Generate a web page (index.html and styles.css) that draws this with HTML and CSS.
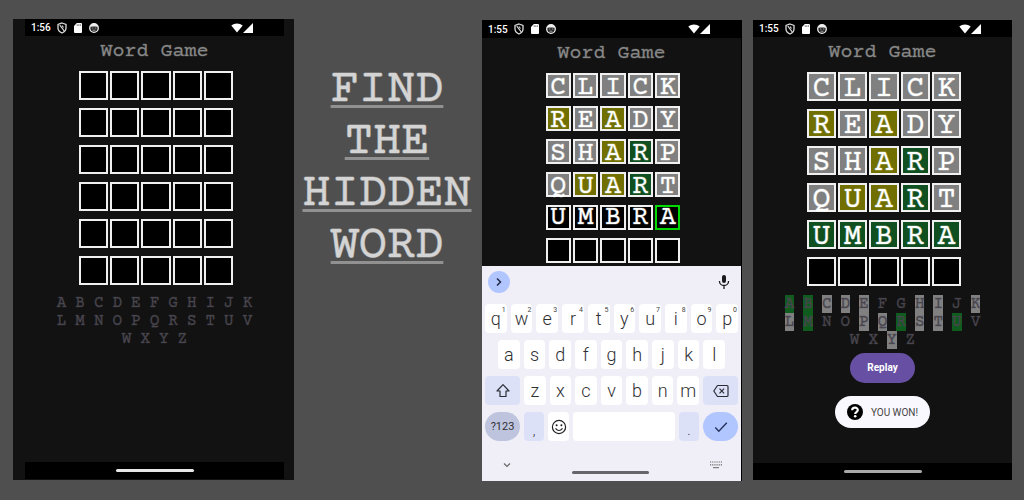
FILE: index.html
```html
<!DOCTYPE html>
<html lang="en">
<head>
<meta charset="utf-8">
<meta name="viewport" content="width=device-width, initial-scale=1">
<title>Word Game</title>
<link rel="stylesheet" href="styles.css">
</head>
<body>
<svg class="defs" aria-hidden="true">
  <symbol id="shield" viewBox="0 0 10 12"><path d="M5 1 9 2.400V6c0 2.400-1.500 4-4 5C2.500 10 1 8.400 1 6V2.400Z" fill="none" stroke="#ddd" stroke-width="1.300"/><path d="M2.800 3.200 7.200 8.800M5 3.500l1.500 2" stroke="#ddd" stroke-width="1.100"/></symbol>
  <symbol id="sd" viewBox="0 0 8 10"><path d="M2.800 0H7q1 0 1 1v8q0 1-1 1H1q-1 0-1-1V3Z" fill="#fff"/><path d="M3.200 1.300v1.600M4.800 1.300v1.600M6.400 1.300v1.600" stroke="#555" stroke-width=".8"/></symbol>
  <symbol id="face" viewBox="0 0 10 10"><circle cx="5" cy="5" r="4.300" fill="#222" stroke="#f0f0f0" stroke-width="1.300"/><path d="M1 4.200Q1.800.8 5 .8T9 4.200L7 3.500H3Z" fill="#f0f0f0"/><path d="M2.800 5h1.600M5.800 5h1.600M3.500 7.200h3" stroke="#aaa" stroke-width=".9"/></symbol>
  <symbol id="wifi" viewBox="0 0 12 10"><path d="M6 9.500.3 2.600C3.500-.2 8.500-.2 11.700 2.600Z" fill="#fff"/></symbol>
  <symbol id="signal" viewBox="0 0 10 10"><path d="M10 0v10H0Z" fill="#fff"/></symbol>
</svg>
<main class="showcase">
  <section class="phone phone-start">
    <div class="screen">
      <div class="status"><time>1:56</time><svg class="shield"><use href="#shield"/></svg><svg class="sd"><use href="#sd"/></svg><svg class="face"><use href="#face"/></svg><svg class="wifi"><use href="#wifi"/></svg><svg class="signal"><use href="#signal"/></svg></div>
      <h2 class="title">Word Game</h2>
      <div class="board">
        <span></span><span></span><span></span><span></span><span></span>
        <span></span><span></span><span></span><span></span><span></span>
        <span></span><span></span><span></span><span></span><span></span>
        <span></span><span></span><span></span><span></span><span></span>
        <span></span><span></span><span></span><span></span><span></span>
        <span></span><span></span><span></span><span></span><span></span>
      </div>
      <div class="letters">
        <div><b>A</b><b>B</b><b>C</b><b>D</b><b>E</b><b>F</b><b>G</b><b>H</b><b>I</b><b>J</b><b>K</b></div>
        <div><b>L</b><b>M</b><b>N</b><b>O</b><b>P</b><b>Q</b><b>R</b><b>S</b><b>T</b><b>U</b><b>V</b></div>
        <div><b>W</b><b>X</b><b>Y</b><b>Z</b></div>
      </div>
      <div class="nav"><i></i></div>
    </div>
  </section>

  <h1 class="headline">FIND<br>THE<br>HIDDEN<br>WORD</h1>

  <section class="phone phone-typing">
    <div class="screen">
      <div class="status"><time>1:55</time><svg class="shield"><use href="#shield"/></svg><svg class="sd"><use href="#sd"/></svg><svg class="face"><use href="#face"/></svg><svg class="wifi"><use href="#wifi"/></svg><svg class="signal"><use href="#signal"/></svg></div>
      <h2 class="title">Word Game</h2>
      <div class="board compact">
        <span class="miss">C</span><span class="miss">L</span><span class="miss">I</span><span class="miss">C</span><span class="miss">K</span>
        <span class="near">R</span><span class="miss">E</span><span class="near">A</span><span class="miss">D</span><span class="miss">Y</span>
        <span class="miss">S</span><span class="miss">H</span><span class="near">A</span><span class="hit">R</span><span class="miss">P</span>
        <span class="miss">Q</span><span class="near">U</span><span class="near">A</span><span class="hit">R</span><span class="miss">T</span>
        <input aria-label="Letter 1" maxlength="1" value="U"><input aria-label="Letter 2" maxlength="1" value="M"><input aria-label="Letter 3" maxlength="1" value="B"><input aria-label="Letter 4" maxlength="1" value="R"><input class="active" aria-label="Letter 5" maxlength="1" value="A">
        <span></span><span></span><span></span><span></span><span></span>
      </div>
      <div class="keyboard">
        <div class="tools">
          <button class="expand" aria-label="Expand toolbar"><svg viewBox="0 0 22 22"><path d="m9 7.500 3.500 3.500L9 14.500" fill="none" stroke="#222b45" stroke-width="1.500"/></svg></button>
          <button class="mic" aria-label="Voice input"><svg viewBox="0 0 12 16"><rect x="4" y="1" width="4" height="8" rx="2" fill="#1b1b1f"/><path d="M1.500 7v.5a4.500 4 0 0 0 9 0V7M6 12v3" fill="none" stroke="#1b1b1f" stroke-width="1.300"/></svg></button>
        </div>
        <div class="keys"><button>q<sup>1</sup></button><button>w<sup>2</sup></button><button>e<sup>3</sup></button><button>r<sup>4</sup></button><button>t<sup>5</sup></button><button>y<sup>6</sup></button><button>u<sup>7</sup></button><button>i<sup>8</sup></button><button>o<sup>9</sup></button><button>p<sup>0</sup></button></div>
        <div class="keys home"><button>a</button><button>s</button><button>d</button><button>f</button><button>g</button><button>h</button><button>j</button><button>k</button><button>l</button></div>
        <div class="keys"><button class="wide tint" aria-label="Shift"><svg viewBox="0 0 16 16"><path d="M8 1.700 14 8h-3v5.500H5V8H2Z" fill="none" stroke="#2b2d36" stroke-width="1.200" stroke-linejoin="round"/></svg></button><button>z</button><button>x</button><button>c</button><button>v</button><button>b</button><button>n</button><button>m</button><button class="wide tint" aria-label="Backspace"><svg viewBox="0 0 16 16"><path d="M4.500 2.500H14q1 0 1 1v9q0 1-1 1H4.500L.8 8Z" fill="none" stroke="#2b2d36" stroke-width="1.200" stroke-linejoin="round"/><path d="m6.500 5.700 4.600 4.600m0-4.600-4.600 4.600" stroke="#2b2d36" stroke-width="1.200"/></svg></button></div>
        <div class="keys"><button class="wide symbols">?123</button><button class="tint low">,</button><button aria-label="Emoji"><svg viewBox="0 0 16 16"><circle cx="8" cy="8" r="6.600" fill="none" stroke="#222" stroke-width="1.200"/><circle cx="5.600" cy="6.300" r="1" fill="#222"/><circle cx="10.400" cy="6.300" r="1" fill="#222"/><path d="M4.500 9.300q3.500 4.400 7 0" fill="none" stroke="#222" stroke-width="1.200"/></svg></button><button class="space" aria-label="Space"></button><button class="tint low">.</button><button class="wide enter" aria-label="Enter"><svg viewBox="0 0 16 16"><path d="m2.300 8.500 3.500 3.700 8-8.400" fill="none" stroke="#26345c" stroke-width="1.400"/></svg></button></div>
        <div class="bottom">
          <svg class="down" viewBox="0 0 8 8"><path d="m1 2.500 3 3 3-3" fill="none" stroke="#666" stroke-width="1.200"/></svg>
          <i></i>
          <svg class="switch" viewBox="0 0 12 8"><path d="M0 1h12M0 3.800h12" stroke="#666" stroke-width="1.200" stroke-dasharray="1.200 .96"/><path d="M3 6.700h6" stroke="#666" stroke-width="1"/></svg>
        </div>
      </div>
    </div>
  </section>

  <section class="phone phone-won">
    <div class="screen">
      <div class="status"><time>1:55</time><svg class="shield"><use href="#shield"/></svg><svg class="sd"><use href="#sd"/></svg><svg class="face"><use href="#face"/></svg><svg class="wifi"><use href="#wifi"/></svg><svg class="signal"><use href="#signal"/></svg></div>
      <h2 class="title">Word Game</h2>
      <div class="board">
        <span class="miss">C</span><span class="miss">L</span><span class="miss">I</span><span class="miss">C</span><span class="miss">K</span>
        <span class="near">R</span><span class="miss">E</span><span class="near">A</span><span class="miss">D</span><span class="miss">Y</span>
        <span class="miss">S</span><span class="miss">H</span><span class="near">A</span><span class="hit">R</span><span class="miss">P</span>
        <span class="miss">Q</span><span class="near">U</span><span class="near">A</span><span class="hit">R</span><span class="miss">T</span>
        <span class="hit">U</span><span class="hit">M</span><span class="hit">B</span><span class="hit">R</span><span class="hit">A</span>
        <span></span><span></span><span></span><span></span><span></span>
      </div>
      <div class="letters">
        <div><b class="hit">A</b><b class="hit">B</b><b class="miss">C</b><b class="miss">D</b><b class="miss">E</b><b>F</b><b>G</b><b class="miss">H</b><b class="miss">I</b><b>J</b><b class="miss">K</b></div>
        <div><b class="miss">L</b><b class="hit">M</b><b>N</b><b>O</b><b class="miss">P</b><b class="miss">Q</b><b class="hit">R</b><b class="miss">S</b><b class="miss">T</b><b class="hit">U</b><b>V</b></div>
        <div><b>W</b><b>X</b><b class="miss">Y</b><b>Z</b></div>
      </div>
      <button class="replay">Replay</button>
      <div class="toast" role="status"><svg viewBox="0 0 16 16"><circle cx="8" cy="8" r="8" fill="#000"/><path d="M5.200 6.200C5.200 2.800 10.800 2.800 10.800 6.100c0 2-2.600 2-2.600 3.800" fill="none" stroke="#fff" stroke-width="2.200"/><circle cx="8.200" cy="12.300" r="1.300" fill="#fff"/></svg>YOU WON!</div>
      <div class="nav dim"><i></i></div>
    </div>
  </section>
</main>
</body>
</html>
```
FILE: styles.css
```css
* { box-sizing: border-box; }

body {
  margin: 0;
  background: #4f4f4f;
  font-family: Roboto, sans-serif;
}

.defs { position: absolute; width: 0; height: 0; }

button { border: 0; padding: 0; font: inherit; }

.showcase {
  display: grid;
  grid-template-columns: 281fr 188fr 260fr 270fr;
  min-height: 100vh;
  padding: 19px 12px 19px 13px;
}

.phone { display: flex; background: #121212; }
.phone-start { padding: 0 10px 1px 12px; margin-bottom: 1px; }
.phone-typing { margin-top: 1px; border-right: 1px solid #000; }
.phone-won { margin: 1px 0 1px 11px; }

.screen { flex: 1; display: flex; flex-direction: column; align-items: center; }

.status {
  align-self: stretch;
  display: flex;
  align-items: center;
  height: 17px;
  padding: 0 31px 0 6px;
  background: #000;
  color: #fff;
  font-size: 10px;
  font-weight: 500;
}
.phone-typing .status { height: 18px; }
.status time { width: 26px; }
.shield { width: 10px; height: 12px; }
.sd { width: 8px; height: 10px; margin-left: 7px; }
.face { width: 10px; height: 10px; margin-left: 7px; }
.wifi { width: 12px; height: 10px; margin-left: auto; }
.signal { width: 10px; height: 10px; }

.title, .headline, .board, .letters {
  font-family: "Nimbus Mono PS", "Courier Prime", "Liberation Mono", monospace;
}

.title {
  margin: 4px 0 7px;
  color: #888;
  font-size: 20px;
  font-weight: 400;
  line-height: 24px;
  -webkit-text-stroke: 1px rgba(136, 136, 136, 0.3);
}

.headline {
  margin: 46px 2px 0 0;
  color: #d4d4d4;
  font-size: 47px;
  font-weight: 400;
  line-height: 52px;
  text-align: center;
  text-decoration: underline;
  text-decoration-thickness: 3px;
  text-underline-offset: 4px;
  text-decoration-skip-ink: none;
  -webkit-text-stroke: 1px rgba(212, 212, 212, 0.5);
}

.board {
  display: grid;
  grid-template-columns: repeat(5, 1fr);
  grid-auto-rows: 29px;
  gap: 8px 2px;
  width: 157px;
  padding-left: 3px;
  color: #fff;
  font-size: 30px;
  line-height: 29px;
}
.board.compact {
  grid-auto-rows: 25px;
  width: 138px;
  font-size: 27px;
  line-height: 25px;
}
.board span, .board input {
  min-width: 0;
  padding: 1px 0 0;
  border: 2px solid #f0f0f0;
  border-radius: 0;
  background: #000;
  color: #fff;
  font: inherit;
  text-align: center;
  -webkit-text-stroke: 1px rgba(255, 255, 255, 0.35);
}
.board .active { border-color: #00d900; }
.board .miss, .letters .miss { background: #808080; }
.board .near { background: #706f00; }
.board .hit { background: #105020; }

.letters {
  margin-top: 9px;
  color: #48454e;
  font-size: 16px;
  line-height: 18px;
  -webkit-text-stroke: 1px rgba(72, 69, 78, 0.3);
}
.letters div { display: flex; justify-content: center; gap: 9px; }
.letters b { font-weight: 400; }
.letters .hit { background: #0f5c1e; }

.nav {
  align-self: stretch;
  display: flex;
  align-items: center;
  justify-content: center;
  height: 17px;
  margin-top: auto;
  background: #000;
}
.nav i { width: 78px; height: 3px; border-radius: 2px; background: #e8e8e8; }
.nav.dim i { background: #a8a8a8; }

.replay {
  margin-top: 4px;
  padding: 0 17px;
  border-radius: 15px;
  background: #6750a4;
  color: #fff;
  font-size: 10px;
  font-weight: 700;
  line-height: 30px;
}

.toast {
  display: flex;
  align-items: center;
  gap: 8px;
  height: 32px;
  margin-top: 13px;
  padding: 0 12px;
  border-radius: 16px;
  background: #faf8ff;
  color: #444;
  font-size: 10px;
}
.toast svg { width: 16px; height: 16px; }

.keyboard {
  align-self: stretch;
  flex: 1;
  display: flex;
  flex-direction: column;
  gap: 7px;
  margin-top: 3px;
  padding: 0 3px;
  background: #f0eff7;
}
.tools {
  display: flex;
  align-items: center;
  justify-content: space-between;
  height: 31px;
  padding: 0 8px 0 3px;
}
.tools button { background: none; }
.tools .expand { width: 22px; height: 22px; border-radius: 50%; background: #b1c5ff; }
.tools svg { display: block; }
.mic svg { width: 12px; height: 16px; }

.keys { display: flex; gap: 4px; }
.keys.home { padding: 0 13px; }
.keys button {
  position: relative;
  flex: 1;
  display: flex;
  align-items: center;
  justify-content: center;
  min-width: 0;
  height: 29px;
  border-radius: 4px;
  background: #fff;
  color: #303034;
  font-size: 18px;
  font-weight: 300;
  line-height: 20px;
}
.keys sup { position: absolute; top: 2px; right: 1px; color: #444; font-size: 7px; font-weight: 400; line-height: 8px; }
.keys svg { width: 16px; height: 16px; }
.keys .wide { flex: 0 0 35px; }
.keys .space { flex: 5; }
.keys .tint { background: #dde1f7; }
.keys .low { padding-top: 6px; font-size: 14px; }
.keys .symbols { border-radius: 15px; background: #bfc4de; font-size: 11px; font-weight: 400; }
.keys .enter { border-radius: 15px; background: #b1c5ff; }

.bottom {
  flex: 1;
  display: flex;
  align-items: center;
  justify-content: space-between;
  padding: 0 16px 0 18px;
}
.bottom i { width: 77px; height: 3px; margin-top: 16px; border-radius: 2px; background: #66656b; }
.down { width: 8px; height: 8px; }
.switch { width: 12px; height: 8px; }
```
